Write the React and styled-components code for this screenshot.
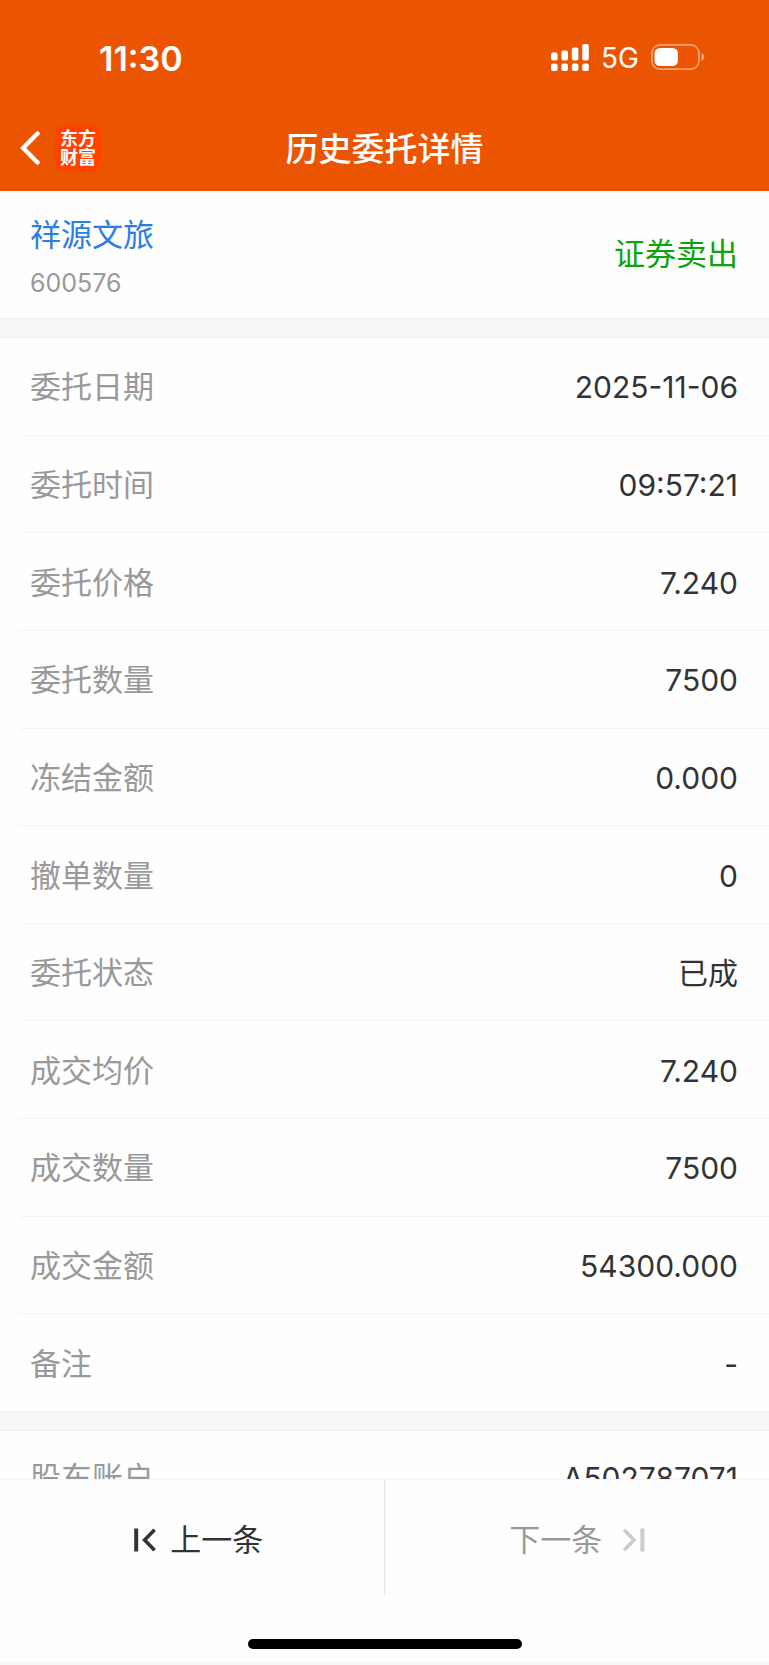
import React from 'react';
import styled, { createGlobalStyle } from 'styled-components';

const orderRows = [
  { label: '委托日期', value: '2025-11-06' },
  { label: '委托时间', value: '09:57:21' },
  { label: '委托价格', value: '7.240' },
  { label: '委托数量', value: '7500' },
  { label: '冻结金额', value: '0.000' },
  { label: '撤单数量', value: '0' },
  { label: '委托状态', value: '已成' },
  { label: '成交均价', value: '7.240' },
  { label: '成交数量', value: '7500' },
  { label: '成交金额', value: '54300.000' },
  { label: '备注', value: '-' },
];

const accountRows = [{ label: '股东账户', value: 'A502787071' }];

const SignalIcon = () => (
  <svg width="38" height="28" viewBox="0 0 38 28" fill="#fff" aria-hidden="true">
    <rect x="0" y="8.5" width="6.6" height="8" rx="2" />
    <rect x="10.4" y="6.5" width="6.6" height="10" rx="2" />
    <rect x="20.8" y="3.5" width="6.6" height="13" rx="2" />
    <rect x="31.2" y="0" width="6.6" height="16.5" rx="2" />
    {[0, 10.4, 20.8, 31.2].map((x) => (
      <rect key={x} x={x} y="19.5" width="6.6" height="7.4" rx="2" />
    ))}
  </svg>
);

const BatteryIcon = () => (
  <svg width="54" height="28" viewBox="0 0 54 28" fill="none" aria-hidden="true">
    <rect x="0.9" y="0.9" width="47" height="24.2" rx="8" stroke="#fff" strokeOpacity="0.45" strokeWidth="1.7" />
    <path d="M50.5 9v8c1.8-.8 2.8-2.3 2.8-4s-1-3.2-2.8-4z" fill="#fff" fillOpacity="0.5" />
    <rect x="3.5" y="4" width="23.5" height="18" rx="5.5" fill="#fff" />
  </svg>
);

const BackIcon = () => (
  <svg width="20" height="34" viewBox="0 0 20 34" fill="none" stroke="#fff" strokeWidth="4.4" aria-hidden="true">
    <path d="M17.5 2.5 3.2 17l14.3 14.5" strokeLinecap="round" />
  </svg>
);

const PrevIcon = () => (
  <svg width="23" height="24" viewBox="0 0 23 24" fill="none" stroke="currentColor" strokeWidth="4" aria-hidden="true">
    <path d="M2.2 .5v23" />
    <path d="M20.6 1.7 10.6 12l10 10.3" strokeWidth="3.6" />
  </svg>
);

const NextIcon = () => (
  <svg width="23" height="24" viewBox="0 0 23 24" fill="none" stroke="#ccc" strokeWidth="4" aria-hidden="true">
    <path d="M20.4 .5v23" />
    <path d="M2 1.7 12 12 2 22.3" strokeWidth="3.6" />
  </svg>
);

const Rows = ({ items }) =>
  items.map((item) => (
    <Row key={item.label}>
      <Label>{item.label}</Label>
      <Value>{item.value}</Value>
    </Row>
  ));

const App = () => {
  return (
    <Page>
      <GlobalStyle />
      <Header>
        <StatusBar>
          <Clock>11:30</Clock>
          <StatusIcons>
            <SignalIcon />
            <Network>5G</Network>
            <BatteryIcon />
          </StatusIcons>
        </StatusBar>
        <NavBar>
          <NavLeft>
            <BackButton type="button" aria-label="返回"><BackIcon /></BackButton>
            <Logo href="#"><span>东方</span><span>财富</span></Logo>
          </NavLeft>
          <Title>历史委托详情</Title>
        </NavBar>
      </Header>
      <Main>
        <Stock>
          <div>
            <StockName href="#">祥源文旅</StockName>
            <StockCode>600576</StockCode>
          </div>
          <Side>证券卖出</Side>
        </Stock>
        <Divider />
        <OrderList><Rows items={orderRows} /></OrderList>
        <Divider />
        <AccountList><Rows items={accountRows} /></AccountList>
      </Main>
      <Footer>
        <Pager>
          <PrevButton type="button"><PrevIcon />上一条</PrevButton>
          <NextButton type="button" disabled>下一条<NextIcon /></NextButton>
        </Pager>
        <HomeIndicator />
      </Footer>
    </Page>
  );
};

const GlobalStyle = createGlobalStyle`
  * {
    box-sizing: border-box;
  }
  body {
    margin: 0;
    background: #fefefe;
    color: #333;
    font-family: Inter, "Noto Sans CJK SC", sans-serif;
  }
  button {
    border: 0;
    padding: 0;
    background: none;
    font: inherit;
    color: inherit;
    cursor: pointer;
  }
  a {
    text-decoration: none;
  }
  svg {
    display: block;
    flex: none;
  }
`;

const Page = styled.div`
  display: flex;
  flex-direction: column;
  min-height: 100vh;
`;

const Header = styled.header`
  background: #eb5502;
  color: #fff;
`;

const StatusBar = styled.div`
  display: flex;
  align-items: center;
  justify-content: space-between;
  height: 106px;
  padding: 10px 64px 0 99px;
`;

const Clock = styled.time`
  font-size: 34px;
  font-weight: 600;
`;

const StatusIcons = styled.div`
  display: flex;
  align-items: center;
  gap: 12px;
`;

const Network = styled.span`
  font-size: 28px;
`;

const NavBar = styled.div`
  display: grid;
  grid-template-columns: 1fr auto 1fr;
  align-items: center;
  height: 85px;
  padding: 0 20px;
`;

const NavLeft = styled.div`
  display: flex;
  align-items: center;
  gap: 15px;
  padding-bottom: 2px;
`;

const BackButton = styled.button`
  display: flex;
`;

const Logo = styled.a`
  display: flex;
  flex-direction: column;
  align-items: center;
  justify-content: center;
  width: 46px;
  height: 46px;
  border-radius: 9px;
  background: #ff4200;
  color: #fff;
  font-size: 18px;
  font-weight: 700;
  line-height: 19px;
`;

const Title = styled.h1`
  margin: 0;
  font-size: 33px;
  font-weight: 500;
  line-height: 48px;
`;

const Main = styled.main`
  flex: 1;
  display: flex;
  flex-direction: column;
`;

const Stock = styled.section`
  display: flex;
  align-items: center;
  justify-content: space-between;
  padding: 20px 31px 14px 30px;
`;

const StockName = styled.a`
  display: block;
  color: #2b7de9;
  font-size: 31px;
  line-height: 48px;
`;

const StockCode = styled.div`
  padding-top: 4px;
  color: #999;
  font-size: 25px;
  line-height: 41px;
`;

const Side = styled.strong`
  padding-bottom: 8px;
  color: #0aa50a;
  font-size: 31px;
  font-weight: 400;
  line-height: 48px;
`;

const Divider = styled.div`
  height: 20px;
  background: #f6f7f9;
  border-top: 1px solid #eee;
  border-bottom: 1px solid #eee;
`;

const OrderList = styled.dl`
  flex: 1;
  display: flex;
  flex-direction: column;
  margin: 0;
`;

const Row = styled.div`
  flex: 1 0 auto;
  display: flex;
  align-items: center;
  justify-content: space-between;
  margin-left: 20px;
  padding: 25px 31px 23px 10px;
  border-bottom: 1px solid #f3f3f3;
  font-size: 31px;
  line-height: 48px;

  &:last-child {
    border-bottom: 0;
  }
`;

const Label = styled.dt`
  color: #999;
`;

const Value = styled.dd`
  margin: 0;
  font-size: 30px;
`;

/* continues underneath the pager */
const AccountList = styled.dl`
  height: 48px;
  margin: 0;
  overflow: hidden;

  ${Row} {
    padding-top: 23px;
  }
`;

const Footer = styled.footer`
  border-top: 1px solid #f5f5f5;
  border-bottom: 3px solid #f6f7f9;
  padding-bottom: 13px;
`;

const Pager = styled.nav`
  display: grid;
  grid-template-columns: 1fr 1fr;
  font-size: 31px;
  line-height: 48px;
`;

const PrevButton = styled.button`
  display: flex;
  align-items: center;
  justify-content: center;
  gap: 13px;
  height: 116px;
  padding: 3px 0 0 14px;
  border-right: 1px solid #e6e6e6;
`;

const NextButton = styled(PrevButton)`
  gap: 20px;
  padding-left: 1px;
  border-right: 0;
  color: #999;
  cursor: default;
`;

const HomeIndicator = styled.div`
  width: 274px;
  height: 10px;
  margin: 43px auto 0;
  border-radius: 5px;
  background: #000;
`;

export default App;
